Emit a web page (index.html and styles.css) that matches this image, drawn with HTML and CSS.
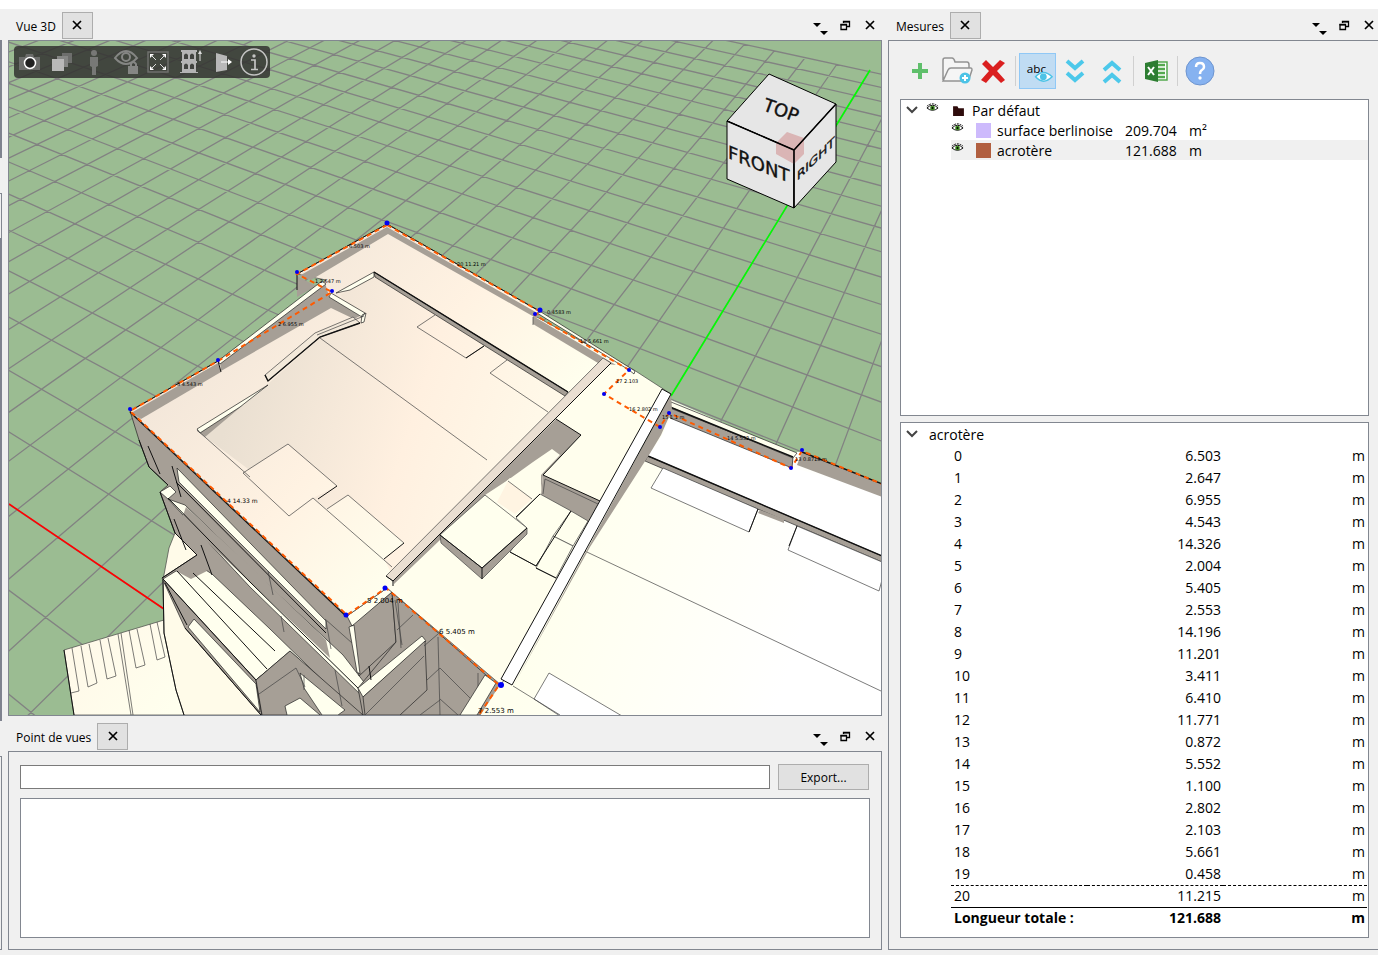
FILE: index.html
```
<!DOCTYPE html>
<html lang="fr">
<head>
    <meta charset="UTF-8">
    <meta name="viewport" content="width=device-width, initial-scale=1.0">
    <title>Vue 3D - Mesures</title>
    <link rel="stylesheet" href="styles.css">
</head>
<body>
    <!-- shared icons -->
    <svg class="defs" width="0" height="0">
        <symbol id="close" viewBox="0 0 12 12"><path d="M2 2l8 8M10 2l-8 8" stroke="#000" stroke-width="1.7" fill="none"/></symbol>
        <symbol id="restore" viewBox="0 0 12 12"><path d="M4.5 4V2.500H10.500V7.500H8M4.500 2.500H10.500M2 5.500H7.500V10.500H2Z" stroke="#000" stroke-width="1.300" fill="none"/><path d="M1.500 5H8V6.500H1.500ZM4 2h7v1.500H4Z"/></symbol>
        <symbol id="menu" viewBox="0 0 18 18"><path d="M2 4h8L6 8ZM9 12h8l-4 4Z"/></symbol>
        <symbol id="chevron" viewBox="0 0 12 12"><path d="M1 3l5 5 5-5" stroke="#444" stroke-width="2" fill="none"/></symbol>
        <symbol id="eye-icon" viewBox="0 0 14 10"><path d="M1 5Q7-1 13 5Q7 10 1 5Z" fill="#fff" stroke="#000"/><circle cx="7" cy="5" r="2.500" fill="#3c8a1e"/><circle cx="7" cy="5" r="1"/><path d="M1 3Q7-2 13 3" fill="none" stroke="#000" stroke-dasharray="2 1"/></symbol>
    </svg>

    <div class="workspace">
        <div class="edge">
            <div class="edge-a"></div>
            <div class="edge-b"></div>
            <div class="edge-c"></div>
            <div class="edge-d"></div>
        </div>

        <main class="left">
            <section class="dock view-dock">
                <header class="dock-header">
                    <span class="dock-title">Vue 3D</span>
                    <button class="tab-close" aria-label="Fermer l'onglet"><svg><use href="#close"/></svg></button>
                    <div class="controls">
                        <button aria-label="Menu"><svg class="menu"><use href="#menu"/></svg></button>
                        <button aria-label="Détacher"><svg><use href="#restore"/></svg></button>
                        <button aria-label="Fermer"><svg><use href="#close"/></svg></button>
                    </div>
                </header>
                <div class="viewport">
                    <svg class="scene" viewBox="9 41 872 674" preserveAspectRatio="xMidYMid slice">
                        <defs>
                            <linearGradient id="roof" gradientUnits="userSpaceOnUse" x1="260" y1="267" x2="497" y2="481">
                                <stop offset="0" stop-color="#f2e6d9"/><stop offset="0.55" stop-color="#fff2e2"/><stop offset="1" stop-color="#ffffee"/>
                            </linearGradient>
                            <linearGradient id="inner" gradientUnits="userSpaceOnUse" x1="240" y1="380" x2="520" y2="470">
                                <stop offset="0" stop-color="#e9dfd1"/><stop offset="0.6" stop-color="#fff0e0"/><stop offset="1" stop-color="#fff8e8"/>
                            </linearGradient>
                            <linearGradient id="right" gradientUnits="userSpaceOnUse" x1="560" y1="560" x2="800" y2="640">
                                <stop offset="0" stop-color="#ffffee"/><stop offset="1" stop-color="#ffffff"/>
                            </linearGradient>
                            <linearGradient id="ground" gradientUnits="userSpaceOnUse" x1="80" y1="620" x2="180" y2="700">
                                <stop offset="0" stop-color="#fff8e8"/><stop offset="1" stop-color="#ffffee"/>
                            </linearGradient>
                        </defs>

                        <rect x="9" y="41" width="872" height="674" fill="#9bbc92"/>
                        <path id="grid" class="grid"/>
                        <path d="M870 70L671 396" stroke="#00ff00" stroke-width="1.600"/>
                        <path d="M9 504L164 609" stroke="#ff0000" stroke-width="1.600"/>

                        <!-- ground and parking -->
                        <g class="thin" fill="url(#ground)">
                            <path d="M64 650L164 620V580L220 560 300 715H74Z"/>
                            <path fill="#fffbe9" d="M175 533L169 548 163 580 164 633 176 690 184 715H300L220 560Z"/>
                            <path fill="none" d="M72 648L79 691 71 693M81 646L88 687 97 683 89 644M100 640L107 679 116 676 108 638M118 634L131 715M121 633L133 715M129 630L136 668 145 665 137 629M150 624L157 660 165 657 157 622"/>
                        </g>
                        <path class="line" d="M64 650L74 715M163 580L164 633 176 690 184 715"/>

                        <!-- facade -->
                        <path class="wall" d="M130 411L139 440 149 467 168 485 160 492 175 533 197 555 162 578 185 628 261 715H500V683L387 588 347 616Z"/>
                        <path class="light" d="M177 468L326 621V629L179 482Z"/>
                        <path class="light" d="M160 492L170 486 176 492 168 499ZM168 499L185 505 250 568 343 655 367 686 363 697 250 587Z"/>
                        <path fill="#a69f96" d="M186 507L250 566 326 640 330 658 182 518Z"/>
                        <path class="light" d="M163 579L176 571 201 567 212 574 270 629 348 705 290 651 256 680Z"/>
                        <path fill="#a69f96" d="M176 571L197 555 207 571 191 579Z"/>
                        <path class="light" d="M194 619L256 684 260 712 188 627Z"/>
                        <path class="line" d="M139 440L149 467 168 485M160 492L175 533 197 555M168 498L250 582 363 693M162 578L197 555M163 579L256 680M185 628L261 715M177 571L267 669M193 573L275 651M176 482L326 633M165 583L187 625M256 680L262 715M256 680L290 652M148 446L160 474M172 466L181 497M174 519L186 550M201 545L212 575"/>
                        <path class="line thick" d="M130 412L347 617"/>
                        <path class="wall" d="M256 680L290 651 363 715H262Z"/>
                        <path class="light" d="M300 673L345 710 338 715H322L304 688ZM285 706L300 698 320 715H287Z"/>
                        <path class="thin" fill="none" d="M259 694L296 668 305 687M304 675V690"/>

                        <!-- front corner -->
                        <path class="wall" d="M352 625L392 592 396 642 359 676Z"/>
                        <path class="light" d="M347 616L387 588 392 592 352 626ZM349 627L354 625 360 674 357 672Z"/>
                        <path class="wall" d="M392 592L487 676 463 715H363L358 688 396 642Z"/>
                        <path class="light" d="M358 688L422 636 426 641 363 697Z"/>
                        <path class="wall" d="M363 697L425 641 427 690 400 715H365Z"/>
                        <path class="thin" fill="none" d="M268 571L273 595M326 621L331 649M281 616L284 632M335 670L342 706M325 619L352 643M395 600L402 645M438 637L440 715M397 630L413 615M424 646L438 634M365 715L424 656M427 680L440 668 470 698M440 699L458 715M398 603L401 648M420 715L440 700M478 673V690"/>
                        <path class="line" d="M369 666L371 680"/>
                        <path class="light" d="M485 675L496 683 477 715H460Z"/>

                        <!-- right roof -->
                        <path fill="url(#right)" d="M671 400L790 452 803 452 882 484V716H480L501 683Z"/>
                        <path fill="#fff" d="M661 437L671 417 792 467 882 496V556L648 456Z"/>
                        <path class="wall" d="M670 408L793 457 792 468 670 418Z"/>
                        <path class="shade" d="M802 452L882 484V497L797 465Z"/>
                        <path class="light" d="M671 402L797 453 793 458 670 407Z"/>
                        <path class="wall" d="M648 456L882 556V562L645 461Z"/>
                        <path class="line thick" d="M648 456L882 556M670 407L793 457M802 452L882 484"/>
                        <g class="thin" fill="#fff">
                            <path d="M663 468L758 509 749 532 651 488Z"/>
                            <path d="M797 526L788 550 879 591 882 580V562Z"/>
                            <path d="M549 673L534 699 560 716H622Z"/>
                        </g>
                        <path class="thin" fill="none" d="M553 536L881 691M513 686L560 715"/>
                        <path class="shade" d="M760 510L784 519V523L758 513Z"/>
                        <path class="line" d="M758 509L749 532M797 526L789 546"/>

                        <!-- main roof -->
                        <path class="thin" fill="url(#roof)" d="M130 411L218 361 326 280 297 274 387 224 541 312 535 316 634 370 671 394 501 685 387 588 347 616Z"/>
                        <path fill="#fffeed" d="M611 363L662 389 501 683 393 583Z"/>
                        <path fill="url(#inner)" d="M197 431L268 384 320 338 362 321 340 295 374 275 567 396 392 576Z"/>
                        <path fill="url(#roof)" d="M243 473L288 444 337 486 313 498 327 509 348 495 404 543 384 559 391 573 347 612 250 520 200 434Z"/>
                        <path class="shade" d="M299 276L387 227 541 315 536 318 388 234 311 280Z"/>
                        <path class="shade" d="M533 316L616 365 598 363 533 324Z"/>
                        <path class="shade" d="M131 413L218 363 221 372 141 419Z"/>
                        <path class="shade" d="M297 276L316 286 297 297ZM205 437L243 405 197 431Z"/>
                        <path class="shade" d="M220 362L325 283 329 296 360 316 354 319 331 308 221 371Z"/>
                        <path class="light" d="M218 361L322 281 326 284 220 364Z"/>
                        <path class="light" d="M331 293L365 313 362 317 329 297ZM362 315L366 313 364 322 361 323Z"/>
                        <path class="light" d="M336 293L374 272 374 277 350 290ZM197 429L268 385 240 407 200 433Z"/>
                        <path class="wall" d="M374 272L568 392 565 396 375 277Z"/>
                        <path class="thin" fill="#f3e9da" d="M353 317L360 323 320 337 268 381 265 375 315 333Z"/>
                        <path class="line thick" d="M374 272L568 392M360 323L320 337 268 381 265 375"/>
                        <path class="line" d="M387 224L541 312M297 274L387 224M130 411L218 361M218 361L221 372M297 274V290"/>
                        <path class="thin" fill="none" d="M320 338L487 460M197 430L250 477M243 473L289 516 313 498 392 567M243 473L288 444 337 486M327 509L348 495 404 543M435 315L417 327 466 358 484 346M507 360L490 373 548 412M533 317V325M317 335L364 316"/>
                        <path class="line" d="M337 486L318 499M404 543L384 559M484 346L466 358"/>

                        <!-- courtyard -->
                        <path class="shade" d="M556 419L581 435 543 475 541 492 510 478 440 540 394 584 393 579Z"/>
                        <path fill="#fffeed" d="M552 449L560 455 541 475 541 493 527 528 485 495 508 480 533 462Z"/>
                        <path fill="#fff4e2" d="M508 481L532 499 515 514 497 502Z"/>
                        <path class="shade" d="M543 475L600 501 588 522 541 495Z"/>
                        <path class="thin" fill="none" d="M508 481L532 499M545 479L543 494M545 479L598 504"/>
                        <g class="thin" fill="#ffffee">
                            <path d="M540 494L571 511 536 566 510 552 527 528 516 518Z"/>
                            <path d="M571 511L588 521 573 546 553 536Z"/>
                            <path d="M553 536L573 546 556 578 536 568Z"/>
                            <path fill="#a69f96" d="M440 535L482 568 527 528V534L482 579 441 543Z"/>
                            <path d="M485 495L527 528 482 568 440 535Z"/>
                        </g>
                        <path class="line" d="M556 419L581 435 543 475 600 501M571 511L536 566M540 494L516 517M440 535L482 568V579M482 568L527 528M510 552L536 566M536 568L556 578"/>
                        <path fill="#eadfd2" class="thin" d="M603 358L611 363 393 581 386 576Z"/>
                        <path class="line" d="M386 576L393 581V586M611 363L393 581"/>
                        <path class="shade" d="M671 394L672 410 661 435 649 455 590 547 514 685Z"/>
                        <path fill="#fff" class="line" d="M662 389L671 394 512 685 501 679Z"/>
                        <path class="light" d="M537 313L541 312 635 371 634 374 629 370Z"/>

                        <!-- measured polyline -->
                        <path class="measure" d="M387 225L297 274 332 292 218 361 130 411 347 615 386 588 499 685 479 715M387 225L541 312 535 315 629 370 604 394 660 427 669 413 791 468 802 451 882 484"/>
                        <g fill="#0000f5">
                            <circle cx="387" cy="223" r="2.500"/><circle cx="297" cy="272" r="2"/><circle cx="332" cy="291" r="2"/>
                            <circle cx="218" cy="360" r="2"/><circle cx="130" cy="409" r="2"/><circle cx="346" cy="615" r="2.500"/>
                            <circle cx="385" cy="588" r="2.500"/><circle cx="501" cy="685" r="3"/><circle cx="540" cy="310" r="2.500"/>
                            <circle cx="535" cy="314" r="2"/><circle cx="629" cy="370" r="2"/><circle cx="604" cy="394" r="2"/>
                            <circle cx="660" cy="427" r="2"/><circle cx="669" cy="413" r="2"/><circle cx="791" cy="468" r="2"/><circle cx="802" cy="450" r="2"/>
                        </g>
                        <g class="tags">
                            <text x="349" y="248">6.503 m</text>
                            <text x="315" y="283">1  2.647 m</text>
                            <text x="278" y="326">2  6.955 m</text>
                            <text x="177" y="386">3  4.543 m</text>
                            <text x="457" y="266">20  11.21 m</text>
                            <text x="547" y="314">0.4583 m</text>
                            <text x="580" y="343">18  5.661 m</text>
                            <text x="616" y="383">17  2.103</text>
                            <text x="629" y="411">16  2.802 m</text>
                            <text x="662" y="419">15  1.1 m</text>
                            <text x="727" y="440">14  5.552 m</text>
                            <text x="795" y="461">13  0.8718 m</text>
                            <text class="mid" x="227" y="503">4  14.33 m</text>
                            <text class="big" x="367" y="603">5  2.004 m</text>
                            <text class="big" x="439" y="634">6  5.405 m</text>
                            <text class="big" x="478" y="713">7  2.553 m</text>
                        </g>

                        <!-- orientation cube -->
                        <g stroke="#000" stroke-linejoin="round" fill="#e6e6e6">
                            <path d="M769 74L836 104 794 150 727 121Z"/>
                            <path d="M727 121L794 150V208L727 179Z"/>
                            <path d="M794 150L836 104V162L794 208Z"/>
                        </g>
                        <path fill="#d08c8c" fill-opacity="0.550" d="M787 132L804 138V154L794 164 776 154V143Z"/>
                        <path d="M727 121L794 150 836 104M794 150V208" fill="none" stroke="#000" stroke-width="1.500"/>
                        <g class="cube">
                            <text transform="translate(762 110) rotate(20)">TOP</text>
                            <text transform="translate(728 158) skewY(22)">FRONT</text>
                            <text class="side" transform="translate(797 181) skewY(-44)">RIGHT</text>
                        </g>
                    </svg>

                    <div class="view-tools">
                        <button aria-label="Capture"><svg viewBox="0 0 32 32"><path d="M5 11h6l1-3h7l1 3h6v13H5Z" fill="#6c6d6b"/><circle cx="16" cy="17" r="5.500" fill="#222" stroke="#fff" stroke-width="1.500"/></svg></button>
                        <button aria-label="Calques"><svg viewBox="0 0 32 32"><path d="M16 7h10v10H16Z" fill="#6d6e6c"/><path d="M11 10h11v11H11Z" fill="#858684"/><path d="M6 13h12v12H6Z" fill="#b9b9b8"/></svg></button>
                        <button aria-label="Personnage"><svg viewBox="0 0 32 32"><path d="M12 11h8v9l-2 1v8h-4v-8l-2-1Z" fill="#777876"/><circle cx="16" cy="7" r="3" fill="#777876"/></svg></button>
                        <button aria-label="Visibilité"><svg viewBox="0 0 32 32"><g fill="none" stroke="#858684" stroke-width="2"><path d="M5 12Q16-2 27 12Q16 24 5 12Z"/><circle cx="16" cy="11" r="4"/><path d="M21 21v-3q2-4 5 0v2"/></g><path d="M18 20h10v8H18Z" fill="#858684"/></svg></button>
                        <button aria-label="Zoom étendu"><svg viewBox="0 0 32 32"><path d="M6 6h20v20H6Z" fill="none" stroke="#6f706e" stroke-width="1.500"/><path d="M8 8h4l-4 4ZM24 8v4l-4-4ZM8 24v-4l4 4ZM24 24h-4l4-4Z" fill="#fff"/><path d="M9 9l5 5M23 9l-5 5M9 23l5-5M23 23l-5-5" stroke="#ddd"/></svg></button>
                        <button aria-label="Étages"><svg viewBox="0 0 32 32"><path d="M7 4h16v2h-1v9h1v2h-1v9h2v1H6v-1h2v-9H7v-2h1V6H7Z" fill="#b4b4b4"/><path d="M10 13V9q2-3 4 0v4ZM16 13V9q2-3 4 0v4ZM10 23v-4q2-3 4 0v4ZM16 23v-4q2-3 4 0v4Z" fill="#41433f"/><path d="M26 15V7" stroke="#ddd"/><path d="M24 8l2-4 2 4Z" fill="#ddd"/></svg></button>
                        <button aria-label="Coupe"><svg viewBox="0 0 32 32"><path d="M10 7l11 3v14l-11 2Z" fill="#b8b8b8"/><path d="M15 16h10" stroke="#fff"/><path d="M22 13l4 3-4 3Z" fill="#fff"/></svg></button>
                        <button aria-label="Informations"><svg viewBox="0 0 32 32"><circle cx="16" cy="16" r="13" fill="none" stroke="#c4c4c3" stroke-width="1.500"/><circle cx="16" cy="10" r="1.700" fill="#c4c4c3"/><path d="M13 14h4v9M13 23.500h7" fill="none" stroke="#c4c4c3" stroke-width="1.700"/></svg></button>
                    </div>
                </div>
            </section>

            <section class="dock">
                <header class="dock-header">
                    <span class="dock-title">Point de vues</span>
                    <button class="tab-close" aria-label="Fermer l'onglet"><svg><use href="#close"/></svg></button>
                    <div class="controls">
                        <button aria-label="Menu"><svg class="menu"><use href="#menu"/></svg></button>
                        <button aria-label="Détacher"><svg><use href="#restore"/></svg></button>
                        <button aria-label="Fermer"><svg><use href="#close"/></svg></button>
                    </div>
                </header>
                <div class="panel">
                    <div class="export-row">
                        <input type="text" aria-label="Nom du point de vue">
                        <button class="export">Export...</button>
                    </div>
                    <div class="box views"></div>
                </div>
            </section>
        </main>

        <aside class="dock right">
            <header class="dock-header">
                <span class="dock-title">Mesures</span>
                <button class="tab-close" aria-label="Fermer l'onglet"><svg><use href="#close"/></svg></button>
                <div class="controls">
                    <button aria-label="Menu"><svg class="menu"><use href="#menu"/></svg></button>
                    <button aria-label="Détacher"><svg><use href="#restore"/></svg></button>
                    <button aria-label="Fermer"><svg><use href="#close"/></svg></button>
                </div>
            </header>
            <div class="panel">
                <div class="toolbar">
                    <button aria-label="Ajouter"><svg viewBox="0 0 36 34"><path d="M10 17h16M18 9v16" stroke="#5fbf6b" stroke-width="4"/></svg></button>
                    <button aria-label="Nouveau dossier"><svg viewBox="0 0 36 34"><path d="M4 26V6q0-2 2-2h7q2 0 3 4h12q2 0 2 3v3M4 27l5-11q1-2 3-2h20q1 0 1 2l-3 9q-1 2-3 2Z" fill="#f5f5f5" stroke="#929292" stroke-width="1.500"/><circle cx="26" cy="24" r="5.500" fill="#4cc3e6"/><path d="M23 24h6M26 21v6" stroke="#fff" stroke-width="2"/></svg></button>
                    <button aria-label="Supprimer"><svg viewBox="0 0 36 34"><path d="M6 10l4-4 7 7 7-7 5 3-8 8 8 9-4 3-8-8-7 8-5-3 8-9Z" fill="#da1f1f"/></svg></button>
                    <span class="sep"></span>
                    <button class="active" aria-label="Afficher les textes"><svg viewBox="0 0 36 34"><text x="7" y="19">abc</text><path d="M16 23q8-9 17 0q-9 9-17 0Z" fill="#fff" stroke="#4cc3e6" stroke-width="1.500"/><circle cx="24" cy="23" r="3.500" fill="#4cc3e6"/></svg></button>
                    <button aria-label="Tout déplier"><svg viewBox="0 0 36 34"><path d="M10 7l8 7 8-7M10 19l8 7 8-7" fill="none" stroke="#4cc8ea" stroke-width="4"/></svg></button>
                    <button aria-label="Tout replier"><svg viewBox="0 0 36 34"><path d="M10 16l8-7 8 7M10 28l8-7 8 7" fill="none" stroke="#4cc8ea" stroke-width="4"/></svg></button>
                    <span class="sep"></span>
                    <button aria-label="Exporter vers Excel"><svg viewBox="0 0 36 34"><path d="M18 8h11v18H18Z" fill="#fff" stroke="#54a94f" stroke-width="1.500"/><path d="M20 11h7M20 15h7M20 19h7M20 23h7" stroke="#54a94f" stroke-width="2.500"/><path d="M7 9l13-3v22L7 25Z" fill="#2d7d32"/><path d="M10 13l6 8M16 13l-6 8" stroke="#fff" stroke-width="2"/></svg></button>
                    <span class="sep"></span>
                    <button aria-label="Aide"><svg viewBox="0 0 36 34"><circle cx="18" cy="17" r="14" fill="#86b2f0" stroke="#6d94cf"/><path d="M14 13q0-4 4-4t4 4q0 2-2 3t-2 4" fill="none" stroke="#fff" stroke-width="2.500"/><circle cx="18" cy="24" r="1.700" fill="#fff"/></svg></button>
                </div>

                <div class="box groups">
                    <ul class="tree">
                        <li class="group">
                            <svg class="chev"><use href="#chevron"/></svg>
                            <svg class="eye"><use href="#eye-icon"/></svg>
                            <svg class="folder" viewBox="0 0 12 12"><path d="M1 2h4l1 2h5v7H1Z" fill="#2e0b0b"/></svg>
                            <span>Par défaut</span>
                        </li>
                        <li class="item">
                            <svg class="eye"><use href="#eye-icon"/></svg>
                            <span class="swatch lilac"></span>
                            <span class="name">surface berlinoise</span>
                            <span class="value">209.704</span>
                            <span>m²</span>
                        </li>
                        <li class="item selected">
                            <svg class="eye"><use href="#eye-icon"/></svg>
                            <span class="swatch brick"></span>
                            <span class="name">acrotère</span>
                            <span class="value">121.688</span>
                            <span>m</span>
                        </li>
                    </ul>
                </div>

                <div class="box details">
                    <div class="details-title"><svg class="chev"><use href="#chevron"/></svg><span>acrotère</span></div>
                    <table>
                        <tbody id="segments"></tbody>
                        <tfoot>
                            <tr><th>Longueur totale :</th><td>121.688</td><td>m</td></tr>
                        </tfoot>
                    </table>
                </div>
            </div>
        </aside>
    </div>

    <script>
        const lengths = ["6.503", "2.647", "6.955", "4.543", "14.326", "2.004", "5.405",
            "2.553", "14.196", "11.201", "3.411", "6.410", "11.771", "0.872", "5.552",
            "1.100", "2.802", "2.103", "5.661", "0.458", "11.215"];

        document.getElementById("segments").innerHTML = lengths.map((length, i) =>
            `<tr><td>${i}</td><td>${length}</td><td>m</td></tr>`
        ).join("");

        // Ground grid: origin, the two vanishing points and the step along each axis
        const origin = [430, 789];
        const vanishX = [-1345, -411];
        const vanishY = [1155, -395];
        const stepX = 0.0379;
        const stepY = 0.0615;
        const size = 25;

        function project(i, j) {
            const a = i * stepX;
            const b = j * stepY;
            const w = 1 + a + b;
            const x = (origin[0] + a * vanishX[0] + b * vanishY[0]) / w;
            const y = (origin[1] + a * vanishX[1] + b * vanishY[1]) / w;
            return x.toFixed(1) + " " + y.toFixed(1);
        }

        // Keep the near end of each line in front of the camera
        function drawGrid() {
            let d = "";
            for (let n = -size; n <= size; n++) {
                const j0 = Math.max(-size, (-0.8 - n * stepX) / stepY);
                const i0 = Math.max(-size, (-0.8 - n * stepY) / stepX);
                d += `M${project(n, j0)}L${project(n, size)}`;
                if (i0 < size) d += `M${project(i0, n)}L${project(size, n)}`;
            }
            document.getElementById("grid").setAttribute("d", d);
        }

        drawGrid();
    </script>
</body>
</html>
```
FILE: styles.css
```
* {
    box-sizing: border-box;
}
body {
    margin: 0;
    padding-top: 9px;
    height: 100vh;
    overflow: hidden;
    background-color: #fff;
    color: #000;
    font-family: "Open Sans", "Noto Sans", sans-serif;
    font-size: 12px;
}
button {
    display: flex;
    align-items: center;
    justify-content: center;
    padding: 0;
    border: none;
    background: none;
    color: inherit;
    font: inherit;
}
.defs {
    position: absolute;
}
.workspace {
    display: grid;
    grid-template-columns: 2px 1fr 493px;
    gap: 6px;
    height: 100%;
    margin-right: -3px;
    padding-bottom: 5px;
    background-color: #f0f0f0;
}
.edge {
    display: flex;
    flex-direction: column;
    gap: 35px;
    padding-top: 31px;
}
.edge-a {
    height: 118px;
    background-color: #7f838f;
}
.edge-b {
    height: 45px;
    border-top: 1px solid #828790;
    border-right: 1px solid #828790;
}
.edge-c {
    flex: 1;
    margin-top: -35px;
    background-color: #7f838f;
}
.edge-d {
    height: 194px;
    border: 1px solid #828790;
    border-left: none;
}
.left {
    display: flex;
    flex-direction: column;
    gap: 4px;
    min-width: 0;
}
.dock {
    display: flex;
    flex-direction: column;
    min-width: 0;
}
.view-dock {
    flex: 1;
    min-height: 0;
}
.dock-header {
    display: flex;
    align-items: center;
    height: 31px;
    padding: 2px 0 0 8px;
}
.dock-title {
    margin-right: 6px;
    padding-top: 2px;
}
.tab-close {
    width: 31px;
    height: 27px;
    padding-bottom: 2px;
    border: 1px solid #adadad;
    background-color: #e1e1e1;
}
.tab-close svg,
.controls svg {
    width: 12px;
    height: 12px;
}
.controls {
    display: flex;
    margin-left: auto;
    padding-bottom: 2px;
}
.controls button {
    width: 25px;
    height: 25px;
}
.controls .menu {
    width: 18px;
    height: 18px;
    margin-top: 6px;
}
.viewport {
    position: relative;
    flex: 1;
    min-height: 0;
    border: 1px solid #828790;
}
.scene {
    display: block;
    width: 100%;
    height: 100%;
}
.grid {
    fill: none;
    stroke: #828282;
    stroke-width: 1.3;
}
.wall {
    fill: #a69f96;
    stroke: #222;
    stroke-width: 0.7;
}
.shade {
    fill: #a69f96;
}
.light {
    fill: #ffffee;
    stroke: #222;
    stroke-width: 0.7;
}
.thin {
    stroke: #444;
    stroke-width: 0.7;
}
.line {
    stroke: #111;
    stroke-width: 1;
}
path.line:not([fill]) {
    fill: none;
}
.thick {
    stroke-width: 1.4;
}
.measure {
    fill: none;
    stroke: #ff5a00;
    stroke-width: 2;
    stroke-dasharray: 5 4;
}
.tags {
    font-family: "DejaVu Sans", sans-serif;
    font-size: 5px;
    white-space: pre;
}
.tags .mid {
    font-size: 6px;
}
.tags .big {
    font-size: 7px;
}
.cube {
    font-family: "DejaVu Sans", sans-serif;
    font-size: 18px;
    fill: #111;
    stroke: #111;
    stroke-width: 0.4;
}
.cube .side {
    font-size: 12px;
}
.view-tools {
    position: absolute;
    top: 5px;
    left: 5px;
    display: flex;
    height: 32px;
    border-radius: 4px;
    background-color: rgba(50, 50, 48, 0.85);
}
.view-tools button,
.view-tools svg {
    width: 32px;
    height: 32px;
}
.panel {
    display: flex;
    flex-direction: column;
    padding: 12px 11px 11px;
    border: 1px solid #828790;
}
.export-row {
    display: flex;
    align-items: center;
    gap: 8px;
    margin-bottom: 8px;
    padding-right: 1px;
}
.export-row input {
    flex: 1;
    min-width: 0;
    height: 24px;
    padding: 0 4px;
    border: 1px solid #7a7a7a;
    background-color: #fff;
    font: inherit;
}
.export {
    width: 91px;
    height: 26px;
    border: 1px solid #adadad;
    background-color: #e1e1e1;
}
.box {
    border: 1px solid #828790;
    background-color: #fff;
    font-size: 14px;
}
.views {
    height: 140px;
}
.right .panel {
    flex: 1;
    min-height: 0;
}
.toolbar {
    display: flex;
    align-items: center;
    height: 36px;
    margin: 0 0 10px;
    padding-left: 1px;
}
.toolbar button {
    width: 37px;
    height: 36px;
}
.toolbar svg {
    width: 36px;
    height: 34px;
}
.toolbar .active {
    border: 1px solid #90c8f6;
    background-color: #c0dcf3;
}
.toolbar text {
    font-size: 12px;
}
.sep {
    width: 1px;
    height: 30px;
    margin: 0 3px;
    background-color: #d0d0d0;
}
.groups {
    height: 317px;
    margin-bottom: 6px;
}
.tree {
    margin: 0;
    padding: 0;
    list-style: none;
}
.tree li {
    display: flex;
    align-items: center;
    height: 20px;
}
.tree .group {
    padding-left: 5px;
}
.tree .item {
    margin-left: 50px;
}
.selected {
    background-color: #f0f0f0;
}
.chev {
    width: 12px;
    height: 12px;
}
.eye {
    width: 13px;
    height: 10px;
    margin-bottom: 4px;
}
.group .eye {
    margin-left: 8px;
}
.folder {
    width: 13px;
    height: 13px;
    margin: 0 7px 0 13px;
}
.swatch {
    width: 15px;
    height: 15px;
    margin: 0 6px 0 12px;
}
.lilac {
    background-color: #cdbafc;
}
.brick {
    background-color: #b15f40;
}
.name {
    width: 128px;
}
.value {
    width: 64px;
}
.details {
    flex: 1;
    min-height: 0;
}
.details-title {
    display: flex;
    align-items: center;
    gap: 11px;
    height: 22px;
    padding-left: 5px;
}
.details table {
    width: calc(100% - 51px);
    margin-left: 50px;
    border-collapse: collapse;
    table-layout: fixed;
}
.details td,
.details th {
    height: 22px;
    padding: 0 2px 0 3px;
    line-height: 20px;
    text-align: right;
}
.details td:first-child,
.details th:first-child {
    width: 136px;
    text-align: left;
}
.details td:nth-child(2) {
    width: 136px;
}
.details tbody tr:last-child {
    border-top: 1px dashed #000;
    border-bottom: 1px solid #000;
}
.details tfoot {
    font-weight: bold;
}
```
